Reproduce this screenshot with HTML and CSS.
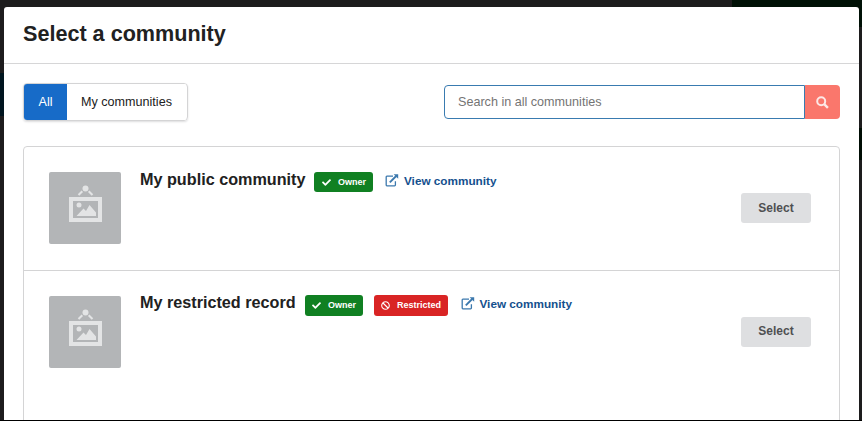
FILE: index.html
```
<!DOCTYPE html>
<html lang="en">
<head>
<meta charset="utf-8">
<title>Select a community</title>
<link rel="stylesheet" href="styles.css">
</head>
<body>
<svg class="sprite" aria-hidden="true">
  <symbol id="check" viewBox="0 0 512 512"><path d="M173.898 439.404l-166.4-166.4c-9.997-9.997-9.997-26.206 0-36.204l36.203-36.204c9.997-9.998 26.207-9.998 36.204 0L192 312.69 432.095 72.596c9.997-9.997 26.207-9.997 36.204 0l36.203 36.204c9.997 9.997 9.997 26.206 0 36.204l-294.4 294.401c-9.998 9.997-26.207 9.997-36.204-.001z"/></symbol>
  <symbol id="ban" viewBox="0 0 512 512"><path d="M256 8C119.034 8 8 119.033 8 256s111.034 248 248 248 248-111.034 248-248S392.967 8 256 8zm130.108 117.892c65.448 65.448 70 165.481 20.677 235.637L150.47 105.216c70.204-49.356 170.226-44.735 235.638 20.676zM125.892 386.108c-65.448-65.448-70-165.481-20.677-235.637L361.53 406.784c-70.203 49.356-170.226 44.736-235.638-20.676z"/></symbol>
  <symbol id="external" viewBox="0 0 14 13"><path d="M8 2.200H1.900Q1.200 2.200 1.200 2.900V11Q1.200 11.800 1.900 11.800H9.600Q10.400 11.800 10.400 11V7.200" fill="none" stroke="currentColor" stroke-width="1.3"/><path d="M4.800 8.400L11.200 2" fill="none" stroke="currentColor" stroke-width="1.9"/><path d="M8.600.2H13.200V4.800Z"/></symbol>
  <symbol id="picture" viewBox="0 0 72 72"><circle cx="36.500" cy="16.500" r="3"/><path d="M33.300 19.300L29.500 23M39.700 19.300L43.500 23" stroke="currentColor" stroke-width="2.1"/><path fill-rule="evenodd" d="M20 25H53V50H20ZM24 29V46H49V29Z"/><circle cx="30" cy="33" r="2.5"/><path d="M27.500 44L34.500 36.500L37 39L40.500 33L47 40.500V44Z"/></symbol>
</svg>
<main class="modal">
  <header class="modal-header"><h1>Select a community</h1></header>
  <div class="toolbar">
    <div class="tabs"><button class="tab active">All</button><button class="tab">My communities</button></div>
    <form class="search">
      <input type="text" placeholder="Search in all communities" aria-label="Search in all communities">
      <button type="button" aria-label="Search"><svg viewBox="0 0 13 13"><circle cx="5.200" cy="5.200" r="4" fill="none" stroke="currentColor" stroke-width="2"/><path d="M8.200 8.200L11.900 11.900" stroke="currentColor" stroke-width="2.4"/></svg></button>
    </form>
  </div>
  <section class="list">
    <article class="item">
      <div class="thumb"><svg><use href="#picture"/></svg></div>
      <div class="heading">
        <h2>My public community</h2>
        <span class="label owner"><svg><use href="#check"/></svg>Owner</span>
        <a class="view"><svg><use href="#external"/></svg>View community</a>
      </div>
      <button class="select">Select</button>
    </article>
    <article class="item">
      <div class="thumb"><svg><use href="#picture"/></svg></div>
      <div class="heading">
        <h2>My restricted record</h2>
        <span class="label owner"><svg><use href="#check"/></svg>Owner</span>
        <span class="label restricted"><svg><use href="#ban"/></svg>Restricted</span>
        <a class="view"><svg><use href="#external"/></svg>View community</a>
      </div>
      <button class="select">Select</button>
    </article>
  </section>
</main>
</body>
</html>
```
FILE: styles.css
```
* { box-sizing: border-box; }
body {
  margin: 0;
  height: 421px;
  padding: 7px 3px 1px 4px;
  overflow: hidden;
  font-family: "Liberation Sans", Arial, sans-serif;
  color: #212121;
  background:
    linear-gradient(#000, #000) 0 420px / 862px 1px no-repeat,
    linear-gradient(#001106, #001106) 732px 0 / 130px 27px no-repeat,
    linear-gradient(#00151f, #00151f) 0 73px / 4px 43px no-repeat,
    linear-gradient(#000d04, #000d04) 859px 128px / 3px 32px no-repeat,
    #1d1c1d;
}
button, input { font-family: inherit; margin: 0; border: 0; }
svg { fill: currentColor; display: block; flex: none; }
.sprite { display: none; }
.modal {
  height: 413px;
  background: #fff;
  border-radius: 3px 3px 0 0;
  overflow: hidden;
}
.modal-header {
  height: 57px;
  padding: 14px 19px 0;
  border-bottom: 1px solid #d6d6d7;
}
h1 { margin: 0; font-size: 21.6px; line-height: 25px; }
.toolbar {
  display: flex;
  justify-content: space-between;
  align-items: flex-start;
  padding: 19px 19px 0;
}
.tabs {
  display: flex;
  width: 165px;
  height: 38px;
  border: 1px solid #d4d4d5;
  border-radius: 4px;
  box-shadow: 0 1px 2px rgba(34, 36, 38, .15);
  overflow: hidden;
}
.tab {
  padding: 0 14px;
  background: #fff;
  font-size: 12.6px;
  white-space: nowrap;
  color: #212121;
}
.tab.active { width: 43px; background: #176bc8; color: #fff; }
.search { display: flex; width: 396px; height: 34px; margin-top: 2px; }
.search input {
  width: 361px;
  padding: 0 13px;
  border: 1px solid #397bb0;
  border-radius: 4px 0 0 4px;
  font-size: 12.6px;
  outline: none;
}
.search input::placeholder { color: #747474; opacity: 1; }
.search button {
  display: flex;
  align-items: center;
  justify-content: center;
  width: 35px;
  padding: 0;
  border-radius: 0 4px 4px 0;
  background: #fa776c;
  color: #fde8e6;
}
.search button svg { width: 13px; height: 13px; }
.list {
  height: 300px;
  margin: 25px 19px 0;
  border: 1px solid #d4d4d5;
  border-radius: 4px;
}
.item {
  display: flex;
  align-items: flex-start;
  height: 123px;
  padding: 25px 28px 0 25px;
}
.item + .item { border-top: 1px solid #d4d4d5; }
.thumb {
  width: 72px;
  height: 72px;
  border-radius: 2px;
  background: #b3b5b7;
  color: #e3e4e5;
}
.thumb svg { width: 72px; height: 72px; }
.heading { display: flex; align-items: flex-start; flex: 1; margin-left: 19px; }
h2 {
  width: 165px;
  margin: -3px 0 0;
  font-size: 16.2px;
  line-height: 20px;
  white-space: nowrap;
}
.item + .item h2 { width: 156px; margin-top: -4px; }
.label {
  display: flex;
  align-items: center;
  height: 20px;
  margin-left: 9px;
  padding: 0 7px 0 8px;
  border-radius: 3px;
  color: #fff;
  font-size: 9px;
  font-weight: bold;
}
.label svg { width: 9px; height: 9px; margin-right: 7px; }
.owner { width: 59px; background: #108022; }
.item + .item .label { height: 21px; margin-top: -1px; padding-bottom: 1px; }
.item + .item .owner { width: 58px; padding-left: 7px; }
.restricted { width: 74px; background: #d92424; }
.item .label.restricted { margin-left: 11px; padding-left: 7px; }
.view {
  display: flex;
  align-items: center;
  height: 18px;
  margin-top: -1px;
  margin-left: 12px;
  color: #14508e;
  font-size: 11.75px;
  font-weight: bold;
  white-space: nowrap;
}
.view svg { width: 14px; height: 13px; margin-right: 5px; color: #3b78ad; }
.item + .item .view { margin-top: -2px; margin-left: 12.5px; }
.select {
  width: 70px;
  height: 30px;
  margin-top: 21px;
  padding: 0;
  border-radius: 3px;
  background: #dedfe1;
  color: #4f5052;
  font-size: 12px;
  font-weight: bold;
}
.item + .item .select { padding-bottom: 2px; }
```
